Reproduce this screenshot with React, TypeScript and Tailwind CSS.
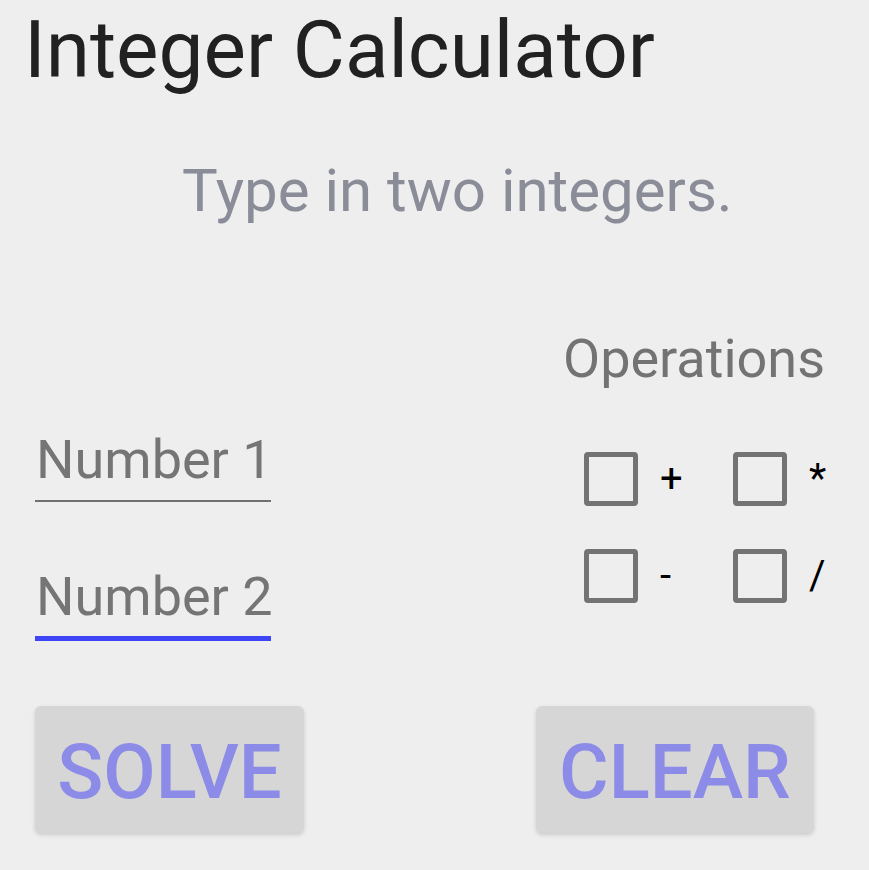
export default function App() {
  return (
    <div className="w-[869px] h-[870px] bg-[#eeeeee] font-['Roboto',sans-serif] overflow-hidden">
      {/* Header */}
      <h1 className="pl-[24px] pt-[10px] text-[80px] leading-none font-normal text-[#212121] whitespace-nowrap">
        Integer Calculator
      </h1>
      <p className="mt-[71px] pl-[182px] text-[60px] leading-none text-[#8a8c98] whitespace-nowrap">
        Type in two integers.
      </p>

      {/* Inputs + operations */}
      <div className="mt-[111px] flex pl-[35px]">
        <div className="w-[236px] shrink-0 pt-[101px] flex flex-col">
          <div className="pb-[13px] border-b-2 border-[#707070] text-[54px] leading-none text-[#757575] pl-[1px] whitespace-nowrap">
            Number 1
          </div>
          <div className="mt-[68px] pb-[12px] border-b-[5px] border-[#3d45f7] text-[54px] leading-none text-[#757575] pl-[1px] whitespace-nowrap">
            Number 2
          </div>
        </div>

        <div className="ml-[292px] flex flex-col">
          <div className="text-[54px] leading-none text-[#737373] whitespace-nowrap">Operations</div>
          <div className="mt-[66px] pl-[21px] grid grid-cols-[149px_auto] gap-y-[43px]">
            {['+', '*', '-', '/'].map((op) => (
              <div key={op} className="flex items-center">
                <div className="w-[54px] h-[54px] border-[5px] border-[#737373] rounded-[4px]" />
                <span className="ml-[22px] text-[40px] leading-none text-black">{op}</span>
              </div>
            ))}
          </div>
        </div>
      </div>

      {/* Buttons */}
      <div className="mt-[65px] flex pl-[35px] gap-[232px]">
        <button className="w-[269px] h-[127px] pt-[4px] bg-[#d6d6d6] rounded-[6px] shadow-[0_2px_4px_rgba(0,0,0,0.15)] text-[76px] leading-none font-medium text-[#8c8ce8]">
          SOLVE
        </button>
        <button className="w-[278px] h-[127px] pt-[4px] bg-[#d6d6d6] rounded-[6px] shadow-[0_2px_4px_rgba(0,0,0,0.15)] text-[76px] leading-none font-medium text-[#8c8ce8]">
          CLEAR
        </button>
      </div>
    </div>
  );
}
